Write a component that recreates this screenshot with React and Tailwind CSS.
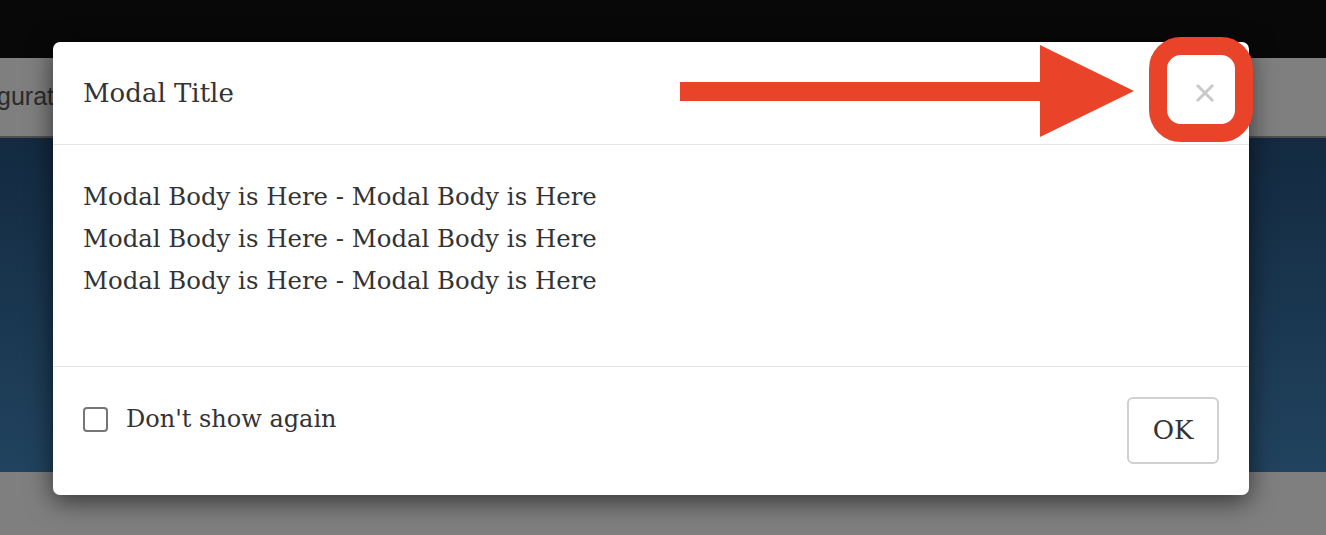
export default function App() {
  const serif = { fontFamily: '"DejaVu Serif", Georgia, serif' };

  return (
    <div className="relative w-[1326px] h-[535px] overflow-hidden bg-[#7f7f7f]">
      {/* page behind the backdrop */}
      <div className="h-[58px] bg-[#080808]" />
      <div className="h-[78px] bg-[#7f7f7f] flex items-center">
        <div className="w-[53px] overflow-hidden whitespace-nowrap">
          <span className="inline-block ml-[-3px] text-[25px] text-[#2b2b2b] font-['Liberation_Sans',Arial,sans-serif]">
            gurat
          </span>
        </div>
      </div>
      <div className="h-[2px] bg-[#4f4f4f]" />
      <div className="h-[334px] bg-gradient-to-b from-[#132a40] to-[#21435f]" />
      <div className="h-[63px] bg-[#7f7f7f]" />

      {/* modal */}
      <div
        className="absolute left-[53px] top-[42px] w-[1196px] h-[453px] bg-white rounded-[7px] shadow-[0_6px_26px_rgba(0,0,0,0.6)] flex flex-col text-[#333]"
        style={serif}
      >
        <div className="h-[103px] border-b border-[#e5e5e5] flex items-center justify-between pl-[30px] pr-[30px]">
          <h4 className="text-[26px] leading-none">Modal Title</h4>
          <button className="w-[40px] h-[40px] flex items-center justify-center mr-[-6px]">
            <svg width="20" height="20" viewBox="0 0 20 20">
              <path d="M2 2 L18 18 M18 2 L2 18" stroke="#c9c9c9" strokeWidth="3" />
            </svg>
          </button>
        </div>

        <div className="h-[222px] border-b border-[#e5e5e5] pl-[30px] pt-[31px] text-[24.4px] leading-[42px]">
          <p>Modal Body is Here - Modal Body is Here</p>
          <p>Modal Body is Here - Modal Body is Here</p>
          <p>Modal Body is Here - Modal Body is Here</p>
        </div>

        <div className="flex-1 flex items-start justify-between pl-[30px] pr-[30px] pt-[30px]">
          <label className="h-[40px] mt-[2px] flex items-center gap-[18px] text-[24px]">
            <span className="w-[25px] h-[25px] border-2 border-[#767676] rounded-[4px] bg-white" />
            <span>Don't show again</span>
          </label>
          <button className="w-[92px] h-[67px] border-2 border-[#d0d0d0] rounded-[6px] text-[26px] text-[#333] flex items-center justify-center">
            OK
          </button>
        </div>
      </div>

      {/* annotation: arrow */}
      <svg className="absolute left-0 top-0" width="1326" height="535" viewBox="0 0 1326 535">
        <rect x="680" y="82" width="362" height="19" fill="#e9432a" />
        <polygon points="1040,45 1040,137 1134,91" fill="#e9432a" />
      </svg>

      {/* annotation: highlight box */}
      <div className="absolute left-[1149px] top-[37px] w-[104px] h-[105px] border-[18px] border-[#e9432a] rounded-[32px]" />
    </div>
  );
}
